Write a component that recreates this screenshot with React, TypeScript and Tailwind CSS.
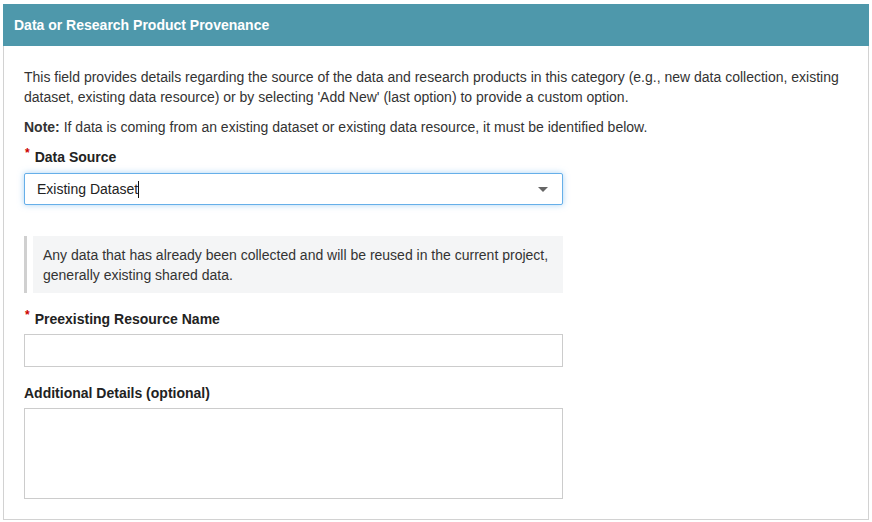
export default function App() {
  const font = { fontFamily: '"Liberation Sans", Arial, sans-serif' };
  return (
    <div className="min-h-screen bg-white pt-[4px] pl-[3px]" style={font}>
      <div className="w-[866px]">
        {/* Panel header */}
        <div className="h-[42px] bg-[#4e98ab] flex items-center px-[11px]">
          <h2 className="text-[14px] font-bold text-white">Data or Research Product Provenance</h2>
        </div>

        {/* Panel body */}
        <div className="border-x border-b border-[#d2d2d2] px-[20px] pt-[21px] pb-[20px] text-[14px] leading-[20px] text-[#333]">
          <p className="mb-[10px]">
            This field provides details regarding the source of the data and research products in this category (e.g., new data collection, existing
            dataset, existing data resource) or by selecting 'Add New' (last option) to provide a custom option.
          </p>
          <p className="mb-[10px]">
            <span className="font-bold">Note:</span> If data is coming from an existing dataset or existing data resource, it must be identified below.
          </p>

          <label className="flex h-[20px] items-center font-bold text-[#222] mb-[6px]">
            <span className="text-[#c00] text-[12px] leading-none relative -top-[4px] ml-[1px] mr-[5px]">*</span>Data Source
          </label>
          <div className="w-[539px] h-[32px] bg-white border border-[#66afe9] rounded-[2px] shadow-[0_0_6px_rgba(102,175,233,0.55)] flex items-center justify-between pl-[12px] pr-[14px]">
            <span className="flex items-center text-[#222]">
              Existing Dataset
              <span className="inline-block w-px h-[17px] bg-[#111]" />
            </span>
            <span className="w-0 h-0 border-x-[5px] border-x-transparent border-t-[5px] border-t-[#666]" />
          </div>

          <div className="mt-[31px] w-[539px] border-l-[3px] border-[#d0d0d0] pl-[6px]">
            <div className="bg-[#f4f5f6] pl-[10px] pr-[10px] pt-[9px] pb-[8px] text-[#333]">
              Any data that has already been collected and will be reused in the current project,
              <br />
              generally existing shared data.
            </div>
          </div>

          <label className="flex h-[20px] items-center font-bold text-[#222] mt-[16px] mb-[5px]">
            <span className="text-[#c00] text-[12px] leading-none relative -top-[4px] ml-[1px] mr-[5px]">*</span>Preexisting Resource Name
          </label>
          <div className="w-[539px] h-[33px] border border-[#cccccc] bg-white" />

          <label className="block h-[20px] font-bold text-[#222] mt-[16px] mb-[5px]">Additional Details (optional)</label>
          <div className="w-[539px] h-[91px] border border-[#cccccc] bg-white" />
        </div>
      </div>
    </div>
  );
}
